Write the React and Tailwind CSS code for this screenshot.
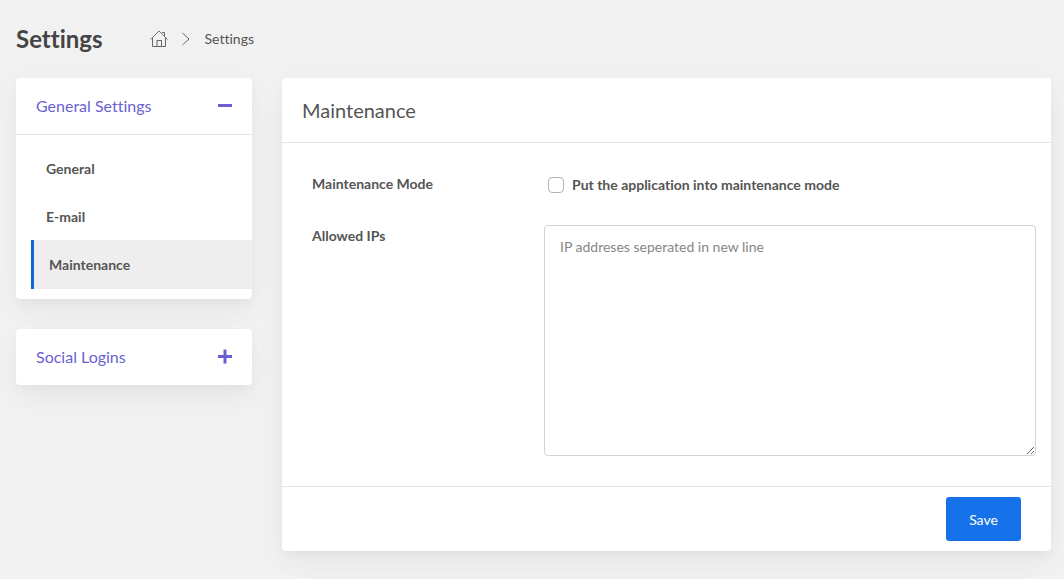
import React from "react";

const cardShadow =
  "shadow-[0_8px_35px_rgba(4,9,20,0.03),0_15px_22px_rgba(4,9,20,0.02),0_4px_8px_rgba(4,9,20,0.03)]";

function HomeIcon() {
  return (
    <svg className="block h-5 w-5" viewBox="0 0 20 20" fill="none" stroke="currentColor" aria-hidden="true">
      <path d="M1.500 10.500 10 2l8.500 8.500" strokeWidth="0.9" />
      <path d="M3.500 9v8.500h13V9" />
      <path d="M8 17.500v-6h4.500v6" />
      <path d="M13 3.500h2.500v4" />
    </svg>
  );
}

function ToggleIcon({ open }) {
  return (
    <svg className="block h-4 w-4" viewBox="0 0 16 16" fill="none" stroke="currentColor" strokeWidth="3" aria-hidden="true">
      <path d="M1 7.500h14" />
      {!open && <path d="M8 .5v14" />}
    </svg>
  );
}

function PanelHeader({ title, open }) {
  return (
    <button
      type="button"
      aria-expanded={open}
      className="flex h-14 w-full items-center justify-between pr-[19px] pl-5 text-left text-base text-[#6a5fd2]"
    >
      {title}
      <ToggleIcon open={open} />
    </button>
  );
}

const links = [
  { label: "General" },
  { label: "E-mail" },
  { label: "Maintenance", active: true },
];

export default function App() {
  return (
    <div className="min-h-screen bg-[#f1f1f1] pr-[13px] pb-7 pl-4 font-['Lato',sans-serif] text-sm text-[#555] [font-variant-ligatures:none]">
      <header className="flex h-[78px] items-center gap-[46px]">
        <h1 className="text-2xl font-bold text-[#444]">Settings</h1>
        <nav aria-label="Breadcrumb" className="flex items-center text-sm">
          <a href="#home" aria-label="Home" className="mr-3 text-[#666]">
            <HomeIcon />
          </a>
          <svg className="mr-3 block h-4 w-3 text-[#666]" viewBox="0 0 12 16" fill="none" stroke="currentColor" aria-hidden="true">
            <path d="M1.500 2l6.500 6-6.500 6" />
          </svg>
          <span>Settings</span>
        </nav>
      </header>

      <div className="grid grid-cols-[236fr_769fr] items-start gap-[30px]">
        <aside className="flex flex-col gap-[30px]">
          <section className={`rounded bg-white ${cardShadow}`}>
            <PanelHeader title="General Settings" open />
            <ul className="border-t border-[#e6e6e6] py-2.5 pl-[15px]">
              {links.map((link) => (
                <li key={link.label} className="-mt-px">
                  <a
                    href={`#${link.label.toLowerCase()}`}
                    aria-current={link.active ? "page" : undefined}
                    className={`flex h-[49px] items-center pl-[15px] font-bold ${
                      link.active ? "border-l-3 border-[#1266dd] bg-[#eee]" : ""
                    }`}
                  >
                    {link.label}
                  </a>
                </li>
              ))}
            </ul>
          </section>
          <section className={`rounded bg-white ${cardShadow}`}>
            <PanelHeader title="Social Logins" open={false} />
          </section>
        </aside>

        <main className={`rounded bg-white ${cardShadow}`}>
          <form onSubmit={(event) => event.preventDefault()}>
            <div className="flex h-[65px] items-center border-b border-[#e6e6e6] px-5">
              <h2 className="text-xl">Maintenance</h2>
            </div>
            <div className="grid grid-cols-[232fr_492fr] pt-[30px] pr-[15px] pb-[30px] pl-[30px]">
              <label htmlFor="mode" className="h-[52px] pt-px font-bold">
                Maintenance Mode
              </label>
              <div className="flex items-start pt-0.5 pl-1">
                <input
                  id="mode"
                  type="checkbox"
                  className="mt-0.5 mr-2 h-4 w-4 appearance-none rounded border border-[#adb5bd] bg-white checked:bg-[#1672ea]"
                />
                <label htmlFor="mode" className="font-bold">
                  Put the application into maintenance mode
                </label>
              </div>
              <label htmlFor="ips" className="pt-px font-bold">
                Allowed IPs
              </label>
              <textarea
                id="ips"
                placeholder="IP addreses seperated in new line"
                className="block h-[231px] w-full resize rounded border border-[#ced4da] bg-white px-[15px] py-[11px] placeholder:text-[#868686]"
              />
            </div>
            <div className="flex justify-end border-t border-[#e6e6e6] py-2.5 pr-[30px]">
              <button type="submit" className="h-11 w-[75px] rounded-[3px] bg-[#1672ea] pt-0.5 text-white">
                Save
              </button>
            </div>
          </form>
        </main>
      </div>
    </div>
  );
}
